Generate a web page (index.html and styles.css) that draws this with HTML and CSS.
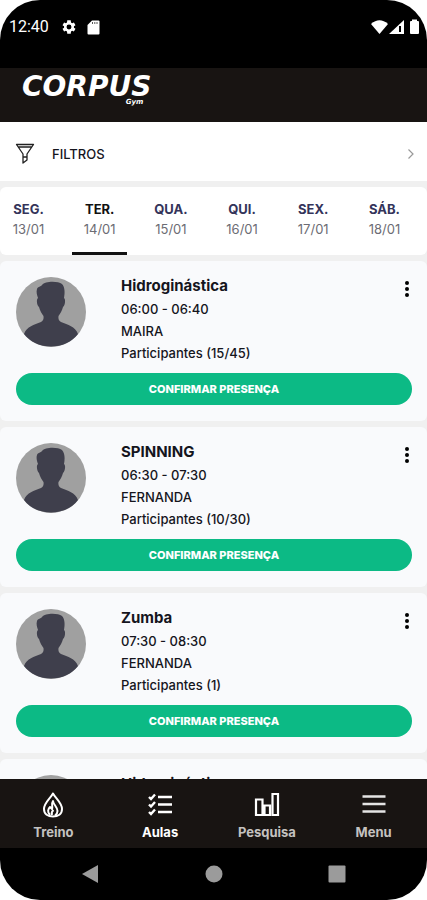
FILE: index.html
```html
<!DOCTYPE html>
<html lang="pt-BR">
<head>
<meta charset="utf-8">
<meta name="viewport" content="width=device-width, initial-scale=1">
<title>Aulas</title>
<link rel="stylesheet" href="styles.css">
</head>
<body>
<svg class="defs" aria-hidden="true">
  <symbol id="avatar" viewBox="0 0 70 70">
    <circle cx="35" cy="35" r="35" fill="#a0a0a0"/>
    <path d="M22 21C21 18 20 15 21 12C22 9 25 10 26 8C29 4 42 4 46 7C49 10 49 16 48 21C50 22 49 29 47 30C46 34 44 37 42.500 39C42 42 43 44 45 45C52 48 59 49 62 57C56 65 46 69.500 35 69.500S14 65 8 57C11 49 18 48 25 45C27 44 28 42 27.500 39C26 37 24 34 23 30C21 29 20 22 22 21Z" fill="#3f3f4c"/>
  </symbol>
  <symbol id="dots" viewBox="0 0 6 18">
    <circle cx="3" cy="3" r="2"/><circle cx="3" cy="9" r="2"/><circle cx="3" cy="15" r="2"/>
  </symbol>
</svg>
<div class="device">
  <div class="status">
    <span class="clock">12:40</span>
    <svg width="16" height="16" viewBox="0 0 24 24" fill="#fff"><path fill-rule="evenodd" d="M19.400 13a7.800 7.800 0 0 0 0-2l2.300-1.800-2.300-4-2.700 1.100-1.700-1L14.600 2H9.400L9 5.300l-1.700 1-2.700-1.100-2.300 4L4.600 11a7.800 7.800 0 0 0 0 2l-2.300 1.800 2.300 4 2.700-1.100 1.700 1 .4 3.300h5.200l.4-3.300 1.700-1 2.700 1.100 2.300-4zM12 8.300a3.700 3.700 0 1 1 0 7.400 3.700 3.700 0 0 1 0-7.400z"/></svg>
    <svg class="sd" width="13" height="15" viewBox="0 0 13 15"><path d="M5 0.500H11.500Q12.500.5 12.500 1.500V13.500Q12.500 14.500 11.500 14.500H1.500Q.5 14.500.5 13.500V5Z" fill="#fff"/><path d="M5.500 2V4M7.800 2V4M10 2V4" stroke="#555"/></svg>
    <svg class="signals" width="50" height="16" viewBox="0 0 50 16" fill="#fff"><path d="M0 5Q8.500-2.500 17 5L8.500 15Z"/><path d="M18 15L33 1V15Z"/><path d="M28 7H30V13H28Z" fill="#000"/><path d="M39 3Q39 2 40 2H41V.5H46V2H47Q48 2 48 3V14Q48 15 47 15H40Q39 15 39 14Z"/></svg>
  </div>
  <header class="brand"><div class="logo"><span>CORPUS</span><small>Gym</small></div></header>
  <main class="content">
    <button class="filters" type="button">
      <svg width="20" height="22" viewBox="0 0 20 22" fill="none" stroke="#222" stroke-width="1.300" stroke-linejoin="round"><path d="M1.500 1.500H18.500L12 11V17L8 20V11ZM3 4H17M8 14H12"/></svg>
      <span>FILTROS</span>
      <svg class="chevron" width="8" height="12" viewBox="0 0 8 12" fill="none" stroke="#999" stroke-width="1.200"><path d="M1.500 1.500L6 6L1.500 10.500"/></svg>
    </button>
    <nav class="days" aria-label="Dias">
      <a href="#"><b>SEG.</b><span>13/01</span></a>
      <a href="#" class="active" aria-current="date"><b>TER.</b><span>14/01</span></a>
      <a href="#"><b>QUA.</b><span>15/01</span></a>
      <a href="#"><b>QUI.</b><span>16/01</span></a>
      <a href="#"><b>SEX.</b><span>17/01</span></a>
      <a href="#"><b>SÁB.</b><span>18/01</span></a>
    </nav>
    <article class="card">
      <div class="info">
        <svg class="avatar"><use href="#avatar"/></svg>
        <div class="text"><h2>Hidroginástica</h2><p>06:00 - 06:40</p><p>MAIRA</p><p>Participantes (15/45)</p></div>
        <button class="more" type="button" aria-label="Opções"><svg width="6" height="18"><use href="#dots"/></svg></button>
      </div>
      <button class="confirm" type="button">CONFIRMAR PRESENÇA</button>
    </article>
    <article class="card">
      <div class="info">
        <svg class="avatar"><use href="#avatar"/></svg>
        <div class="text"><h2>SPINNING</h2><p>06:30 - 07:30</p><p>FERNANDA</p><p>Participantes (10/30)</p></div>
        <button class="more" type="button" aria-label="Opções"><svg width="6" height="18"><use href="#dots"/></svg></button>
      </div>
      <button class="confirm" type="button">CONFIRMAR PRESENÇA</button>
    </article>
    <article class="card">
      <div class="info">
        <svg class="avatar"><use href="#avatar"/></svg>
        <div class="text"><h2>Zumba</h2><p>07:30 - 08:30</p><p>FERNANDA</p><p>Participantes (1)</p></div>
        <button class="more" type="button" aria-label="Opções"><svg width="6" height="18"><use href="#dots"/></svg></button>
      </div>
      <button class="confirm" type="button">CONFIRMAR PRESENÇA</button>
    </article>
    <article class="card">
      <div class="info">
        <svg class="avatar"><use href="#avatar"/></svg>
        <div class="text"><h2>Hidroginástica</h2></div>
      </div>
    </article>
  </main>
  <nav class="tabs" aria-label="Principal">
    <a href="#"><svg width="22" height="26" viewBox="0 0 22 26" fill="none" stroke="#fff" stroke-width="2" stroke-linejoin="round"><path d="M11 1.500C8 7 2 11 2 17C2 22 6 24.500 11 24.500S20 22 20 17C20 11 14 7 11 1.500Z"/><path d="M8 23C5 20 6 17 8 15L10 17C11 14 9 12 11 9C11.500 13 15.500 15 15.500 19C15.500 21 14.500 22.500 13 23.500M10 23Q9 20 11.500 18"/></svg><span>Treino</span></a>
    <a href="#" class="active" aria-current="page"><svg width="26" height="26" viewBox="0 0 26 26" fill="none" stroke="#fff" stroke-width="2.400"><path d="M11 5H25M11 12.500H25M11 20H25"/><path d="M2 5L4 7L8 2.500M2 12.500L4 14.500L8 10M2 20L4 22L8 17.500"/></svg><span>Aulas</span></a>
    <a href="#"><svg width="26" height="26" viewBox="0 0 26 26" fill="none" stroke="#fff" stroke-width="2.200"><path d="M2 7.500H8.500V23H2ZM10.500 13.500H16V23H10.500ZM18.500 2H24V23H18.500Z"/></svg><span>Pesquisa</span></a>
    <a href="#"><svg width="26" height="26" viewBox="0 0 26 26" stroke="#e4e4e4" stroke-width="2.400"><path d="M1.500 4.500H24.500M1.500 12H24.500M1.500 19.500H24.500"/></svg><span>Menu</span></a>
  </nav>
  <div class="system">
    <button type="button" aria-label="Voltar"><svg width="18" height="20" viewBox="0 0 18 20"><path d="M1 10L17 1V19Z"/></svg></button>
    <button type="button" aria-label="Início"><svg width="18" height="18" viewBox="0 0 18 18"><circle cx="9" cy="9" r="8.500"/></svg></button>
    <button type="button" aria-label="Recentes"><svg width="18" height="18" viewBox="0 0 18 18"><rect x="0.500" y="0.500" width="17" height="17" rx="1"/></svg></button>
  </div>
</div>
</body>
</html>
```

FILE: styles.css
```css
* { box-sizing: border-box; }
body { margin: 0; background: #fff; font-family: Inter, Roboto, sans-serif; color: #15151d; }
button { border: 0; padding: 0; background: none; font: inherit; color: inherit; }
a { color: inherit; text-decoration: none; }
svg { display: block; flex: none; }
.defs { position: absolute; width: 0; height: 0; }

.device { display: flex; flex-direction: column; height: 100vh; overflow: hidden; border-radius: 40px; background: #000; }

.status { display: flex; align-items: center; height: 68px; padding: 0 6px 14px 9px; color: #fff; }
.clock { font: 16px/20px Roboto, sans-serif; margin-right: 12px; }
.sd { margin-left: 10px; }
.signals { margin-left: auto; }

.brand { display: flex; align-items: flex-start; height: 54px; padding: 7px 22px; background: #181412; }
.logo { display: flex; flex-direction: column; color: #fff; font: italic bold 28px/24px "DejaVu Sans", sans-serif; }
.logo small { align-self: flex-end; margin-right: 8px; font-size: 7px; line-height: 6px; }

.content { flex: 1; min-height: 0; overflow: hidden; display: flex; flex-direction: column; gap: 6px; background: #f0f0f0; }
.content > * { flex: none; }

.filters { display: flex; align-items: center; height: 59px; padding: 4px 12px 0 15px; background: #fff; font-size: 13px; font-weight: 500; }
.filters span { margin-left: 17px; }
.chevron { margin-left: auto; }

.days { display: flex; justify-content: space-between; height: 68px; padding: 0 15px 0 1px; border-radius: 6px; background: #fff; }
.days a { display: flex; flex-direction: column; align-items: center; width: 55px; padding-top: 12px; border-bottom: 3px solid transparent; font-size: 13px; line-height: 20px; color: #6c6c74; }
.days b { font-size: 13px; color: #34345a; }
.days .active { border-color: #111; }
.days .active b { color: #111; }

.card { padding: 13px 15px 16px 16px; border-radius: 6px; background: #f9fafc; }
.info { display: flex; align-items: flex-start; }
.avatar { width: 70px; height: 70px; margin: 3px 35px 0 0; }
.text { flex: 1; }
.text h2 { margin: 0; font-size: 15px; line-height: 24px; font-weight: 700; }
.text p { margin: 0; font-size: 13px; line-height: 22px; font-weight: 500; }
.more { margin-top: 6px; padding: 0 2px; }
.confirm { display: block; width: 100%; height: 32px; margin-top: 9px; border-radius: 16px; background: #0cba85; color: #fff; font-size: 11px; font-weight: 800; line-height: 30px; }

.tabs { display: grid; grid-template-columns: repeat(4, 1fr); height: 69px; background: #181412; color: #c4c2c0; }
.tabs a { display: flex; flex-direction: column; align-items: center; gap: 4px; padding-top: 13px; font-size: 13px; line-height: 20px; font-weight: 700; }
.tabs .active { color: #fff; }

.system { display: flex; justify-content: space-between; align-items: center; height: 52px; padding: 0 81px; fill: #9b9b9b; }
```
